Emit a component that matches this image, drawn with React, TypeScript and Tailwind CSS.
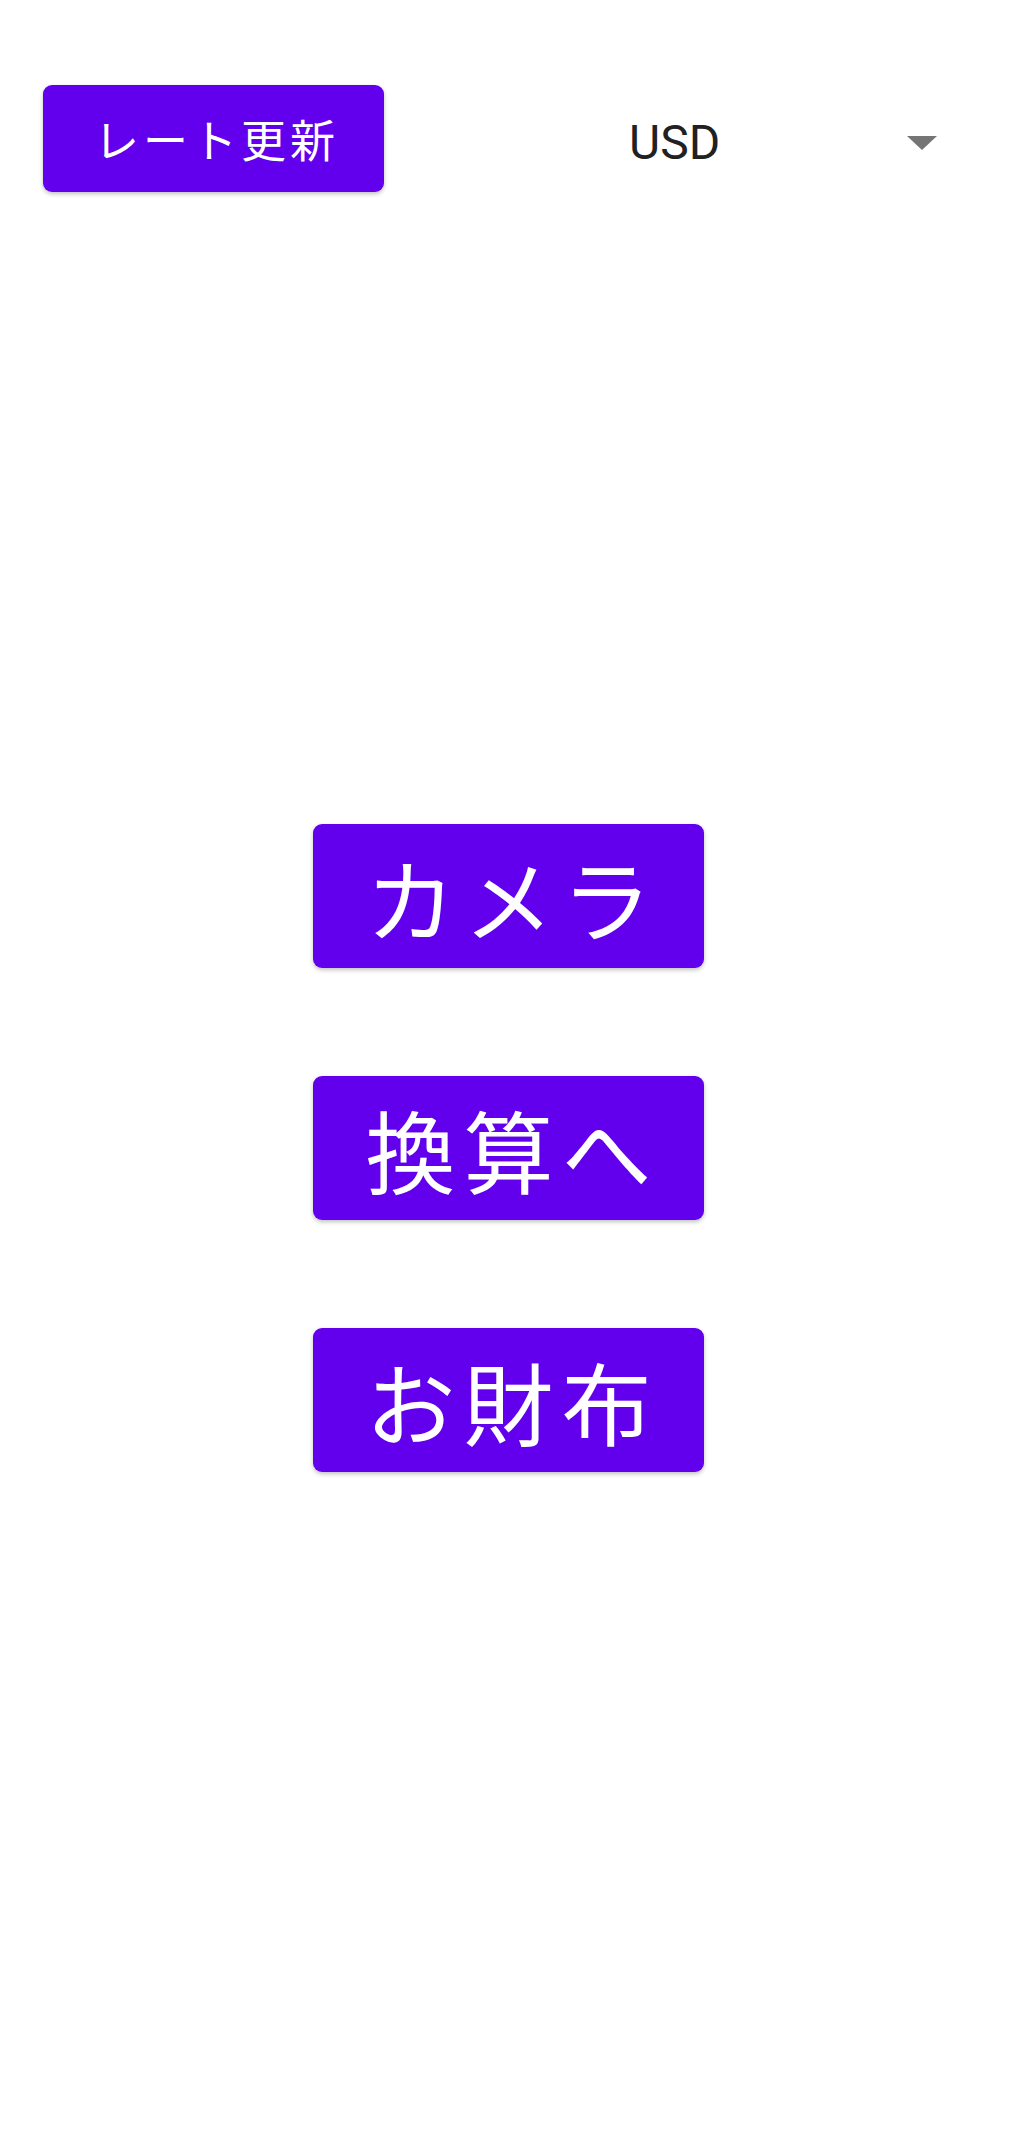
import { useState } from "react";

const JP = "font-['Noto_Sans_CJK_JP','Noto_Sans',sans-serif]";

export default function App() {
  const [currency] = useState("USD");

  const menus = ["カメラ", "換算へ", "お財布"];

  return (
    <div className="min-h-[2130px] w-full bg-white">
      {/* 上部：レート更新 + 通貨選択 */}
      <div className="flex items-center pl-[43px] pr-[87px] pt-[85px]">
        <button
          className={`${JP} flex h-[107px] w-[341px] items-center justify-center rounded-[9px] bg-[#6200ee] pl-[6px] text-[45px] font-normal tracking-[0.089em] text-white shadow-[0_2px_4px_rgba(0,0,0,0.25)]`}
        >
          レート更新
        </button>
        <div className="ml-auto flex w-[308px] items-center pt-[8px]">
          <span className="font-['Roboto',sans-serif] text-[48px] leading-none text-[#212121]">
            {currency}
          </span>
          <svg
            className="ml-auto"
            width="30"
            height="14"
            viewBox="0 0 30 14"
          >
            <polygon points="0,0 30,0 15,14" fill="#757575" />
          </svg>
        </div>
      </div>

      {/* メニュー */}
      <div className="mt-[632px] flex flex-col items-center gap-[108px] pr-[7px]">
        {menus.map((label) => (
          <button
            key={label}
            className={`${JP} flex h-[144px] w-[391px] items-center justify-center rounded-[9px] bg-[#6200ee] pl-[8px] text-[90px] font-normal leading-none tracking-[0.089em] text-white shadow-[0_2px_4px_rgba(0,0,0,0.25)]`}
          >
            {label}
          </button>
        ))}
      </div>
    </div>
  );
}
